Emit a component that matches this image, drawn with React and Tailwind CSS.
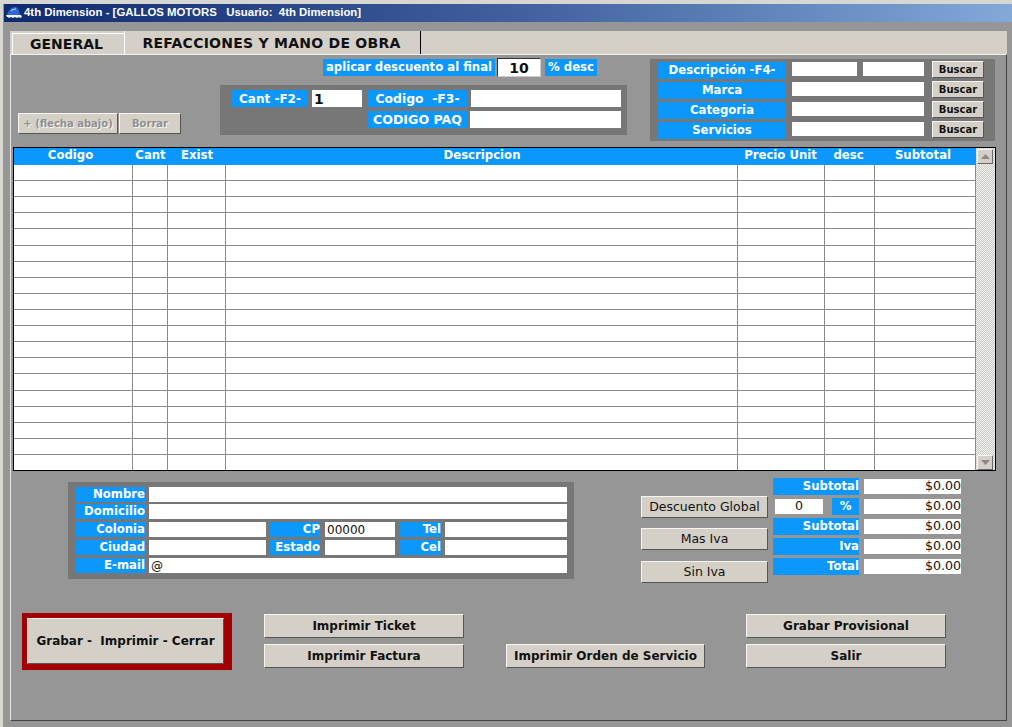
const rows = Array.from({ length: 19 });
const cols = ['w-[119px]', 'w-[35px]', 'w-[58px]', 'w-[512px]', 'w-[87px]', 'w-[50px]', 'w-[101px]'];

function Label({ className = '', children }) {
  return <div className={`flex items-center bg-[#0b97fb] pt-[1px] font-bold leading-none whitespace-pre text-white ${className}`}>{children}</div>;
}

function Field({ className = '', children }) {
  return <div className={`flex items-center bg-white leading-none text-[#111] ${className}`}>{children}</div>;
}

function Btn({ className = 'text-[#111]', size = '', children }) {
  return (
    <button className={`flex items-center justify-center whitespace-pre border border-t-[#f6f5f2] border-l-[#f6f5f2] border-r-[#555] border-b-[#555] bg-[#d4d0c8] leading-none ${size} ${className}`}>
      {children}
    </button>
  );
}

function ScrollArrow({ down }) {
  return (
    <div className="flex h-[15px] w-[16px] items-center justify-center border border-t-[#f6f5f2] border-l-[#f6f5f2] border-r-[#6a6a6a] border-b-[#6a6a6a] bg-[#d4d0c8]">
      <svg width="9" height="5" viewBox="0 0 9 5" className={down ? '' : 'rotate-180'}>
        <path d="M0 0h9L4.5 5z" fill="#8a8a8a" />
      </svg>
    </div>
  );
}

function SearchRow({ title, children }) {
  return (
    <div className="flex h-[20px] items-start">
      <Label className="mt-[1px] h-[17px] w-[128px] justify-center text-[11.7px]">{title}</Label>
      <div className="mt-[1px] ml-[6px] flex w-[132px] justify-between">{children}</div>
      <Btn size="ml-[8px] h-[17px] w-[52px] text-[10px] font-bold">Buscar</Btn>
    </div>
  );
}

function TotalRow({ title, value }) {
  return (
    <div className="flex h-[20px] items-center">
      <Label className="h-[17px] w-[86px] justify-end text-[11.7px]">{title}</Label>
      <Field className="ml-[5px] h-[15px] w-[97px] justify-end text-[12.6px]">{value}</Field>
    </div>
  );
}

export default function App() {
  return (
    <div className="flex h-[727px] w-[1012px] flex-col overflow-hidden border-t-[4px] border-l-[3px] border-t-[#d8d6d0] border-l-[#d8d6d0] bg-[#969696] font-['DejaVu_Sans',sans-serif]">
      <div className="ml-[1px] flex h-[18px] shrink-0 items-center bg-gradient-to-r from-[#0f2a6e] via-[#3f5f9d] to-[#84a8d8] pl-[2px] font-['Liberation_Sans',sans-serif] text-[11.4px] font-bold whitespace-pre text-white">
        <svg width="16" height="14" viewBox="0 0 16 14" className="mr-[2px]">
          <path d="M1 9C2 5 5 1 9 1c2 0 3 2 4 4l1 4z" fill="#2f67d6" />
          <path d="M5 5c1-1 3-2 5-2" stroke="#cfdcff" strokeWidth="1" fill="none" />
          <path d="M0 9h15l1 2-2 1-1-1-2 1-2-1-2 1-2-1-2 1-1-1H1z" fill="#eef2fc" />
        </svg>
        4th Dimension - [GALLOS MOTORS   Usuario:  4th Dimension]
      </div>

      <div className="ml-[7px] mt-[9px] flex h-[690px] w-[997px] shrink-0 flex-col">
        <div className="flex h-[23px] shrink-0 items-end bg-[#d4d0c8]">
          <div className="ml-[2px] flex h-[21px] w-[112px] items-center justify-center border-t border-l border-white pr-[4px] text-[14px] font-bold text-[#111]">GENERAL</div>
          <div className="flex h-[23px] w-[297px] items-start justify-center border-r border-l border-r-black border-l-white pt-[2px] pr-[2px] text-[14px] font-bold tracking-[0.25px] text-[#111]">REFACCIONES Y MANO DE OBRA</div>
        </div>

        <div className="flex flex-1 flex-col border border-t-[#f0f0f0] border-r-[#444] border-b-[#444] border-l-[#e8e8e8]">
          <div className="flex h-[92px] shrink-0 pt-[4px]">
            <div className="flex w-[209px] gap-[1px] pt-[54px] pl-[7px]">
              <Btn size="h-[21px] w-[100px] text-[10px] font-bold" className="text-[#8f8f8f] [text-shadow:1px_1px_0_#f4f4f0]">+ (flecha abajo)</Btn>
              <Btn size="h-[21px] w-[62px] text-[10px] font-bold" className="text-[#8f8f8f] [text-shadow:1px_1px_0_#f4f4f0]">Borrar</Btn>
            </div>

            <div className="flex w-[407px] flex-col">
              <div className="ml-[103px] flex h-[17px] items-center">
                <Label className="h-[17px] w-[172px] justify-center text-[11.7px]">aplicar descuento al final</Label>
                <Field className="ml-[2px] h-[19px] w-[44px] justify-center border border-t-[#333] border-l-[#333] border-r-[#ccc] border-b-[#ccc] text-[14px] font-bold">10</Field>
                <Label className="ml-[4px] h-[17px] w-[52px] justify-center text-[11.7px]">% desc</Label>
              </div>
              <div className="mt-[9px] grid h-[50px] grid-cols-[80px_56px_103px_150px] grid-rows-[17px_17px] content-start gap-y-[4px] bg-[#777777] pt-[5px] pl-[12px]">
                <Label className="w-[76px] justify-center text-[12px]">Cant -F2-</Label>
                <Field className="w-[50px] pl-[2px] text-[14px] font-bold">1</Field>
                <Label className="w-[99px] justify-center text-[12.4px]">Codigo  -F3-</Label>
                <Field />
                <Label className="col-start-3 w-[99px] justify-center text-[12.6px]">CODIGO PAQ</Label>
                <Field className="-ml-[1px]" />
              </div>
            </div>

            <div className="ml-[23px] flex h-[82px] w-[345px] flex-col bg-[#777777] pt-[2px] pl-[8px]">
              <SearchRow title="Descripción -F4-">
                <Field className="h-[14px] w-[65px]" />
                <Field className="h-[14px] w-[61px]" />
              </SearchRow>
              <SearchRow title="Marca"><Field className="h-[14px] w-full" /></SearchRow>
              <SearchRow title="Categoria"><Field className="h-[14px] w-full" /></SearchRow>
              <SearchRow title="Servicios"><Field className="h-[14px] w-full" /></SearchRow>
            </div>
          </div>

          <div className="ml-[2px] flex h-[324px] w-[983px] shrink-0 border border-black bg-[#d4d0c8]">
            <div className="flex w-[962px] flex-col">
              <div className="flex h-[17px] shrink-0 items-center bg-[#0b97fb] pb-[2px] text-[11.7px] leading-none font-bold text-white">
                <div className="w-[119px] pr-[6px] text-center">Codigo</div>
                <div className="w-[35px] text-center">Cant</div>
                <div className="w-[58px] text-center">Exist</div>
                <div className="w-[512px] text-center">Descripcion</div>
                <div className="w-[87px] pr-[2px] text-center">Precio Unit</div>
                <div className="w-[50px] pr-[3px] text-center">desc</div>
                <div className="w-[101px] pr-[5px] text-center">Subtotal</div>
              </div>
              <div className="flex flex-1 flex-col bg-white">
                {rows.map((_, i) => (
                  <div key={i} className="flex flex-1 border-b border-[#8a8a8a] last:border-b-0">
                    {cols.map((w) => (
                      <div key={w} className={`${w} border-r border-[#8a8a8a]`} />
                    ))}
                  </div>
                ))}
              </div>
            </div>
            <div className="flex flex-1 flex-col justify-between bg-[repeating-conic-gradient(#c8c8c4_0_25%,#f4f4f2_0_50%)] bg-[length:2px_2px] pt-[1px] pl-[1px]">
              <ScrollArrow />
              <ScrollArrow down />
            </div>
          </div>

          <div className="flex h-[142px] shrink-0">
            <div className="mt-[11px] ml-[57px] flex h-[97px] w-[506px] flex-col gap-[2px] bg-[#777777] px-[7px] pt-[5px] text-[11.7px]">
              <div className="flex h-[15px] gap-[4px]">
                <Label className="w-[70px] justify-end">Nombre</Label>
                <Field className="w-[418px]" />
              </div>
              <div className="flex h-[15px] gap-[4px]">
                <Label className="w-[70px] justify-end">Domicilio</Label>
                <Field className="w-[418px]" />
              </div>
              <div className="mt-[1px] flex h-[15px]">
                <Label className="w-[70px] justify-end">Colonia</Label>
                <Field className="ml-[4px] w-[117px]" />
                <Label className="ml-[4px] w-[50px] justify-end">CP</Label>
                <Field className="ml-[5px] w-[70px] pl-[2px] text-[12px]">00000</Field>
                <Label className="ml-[4px] w-[42px] justify-end">Tel</Label>
                <Field className="ml-[4px] w-[122px]" />
              </div>
              <div className="mt-[1px] flex h-[15px]">
                <Label className="w-[70px] justify-end">Ciudad</Label>
                <Field className="ml-[4px] w-[117px]" />
                <Label className="ml-[4px] w-[50px] justify-end">Estado</Label>
                <Field className="ml-[5px] w-[70px]" />
                <Label className="ml-[4px] w-[42px] justify-end">Cel</Label>
                <Field className="ml-[4px] w-[122px]" />
              </div>
              <div className="mt-[1px] flex h-[15px] gap-[4px]">
                <Label className="w-[70px] justify-end">E-mail</Label>
                <Field className="w-[418px] pl-[2px] text-[12px]">@</Field>
              </div>
            </div>

            <div className="mt-[25px] ml-[67px] flex w-[127px] flex-col text-[12.5px]">
              <Btn size="h-[22px]">Descuento Global</Btn>
              <Btn size="mt-[10px] h-[22px]">Mas Iva</Btn>
              <Btn size="mt-[11px] h-[22px]">Sin Iva</Btn>
            </div>

            <div className="mt-[5px] ml-[5px] flex flex-col">
              <TotalRow title="Subtotal" value="$0.00" />
              <div className="flex h-[20px] items-center">
                <Field className="ml-[2px] h-[15px] w-[48px] justify-center text-[12.6px]">0</Field>
                <Label className="ml-[9px] h-[17px] w-[27px] justify-center text-[11.7px]">%</Label>
                <Field className="ml-[5px] h-[15px] w-[97px] justify-end text-[12.6px]">$0.00</Field>
              </div>
              <TotalRow title="Subtotal" value="$0.00" />
              <TotalRow title="Iva" value="$0.00" />
              <TotalRow title="Total" value="$0.00" />
            </div>
          </div>

          <div className="flex shrink-0 pl-[11px]">
            <div className="flex h-[57px] w-[210px] bg-[#a30006] pt-[5px] pl-[5px]">
              <Btn size="h-[46px] w-[197px] text-[12px] font-bold">Grabar -  Imprimir - Cerrar</Btn>
            </div>
            <div className="mt-[1px] ml-[32px] flex w-[200px] flex-col gap-[6px] text-[12px] font-bold">
              <Btn size="h-[24px]">Imprimir Ticket</Btn>
              <Btn size="h-[24px]">Imprimir Factura</Btn>
            </div>
            <Btn size="mt-[31px] ml-[42px] h-[24px] w-[199px] text-[12px] font-bold">Imprimir Orden de Servicio</Btn>
            <div className="mt-[1px] ml-[41px] flex w-[200px] flex-col gap-[6px] text-[12px] font-bold">
              <Btn size="h-[24px]">Grabar Provisional</Btn>
              <Btn size="h-[24px]">Salir</Btn>
            </div>
          </div>
        </div>
      </div>
    </div>
  );
}
